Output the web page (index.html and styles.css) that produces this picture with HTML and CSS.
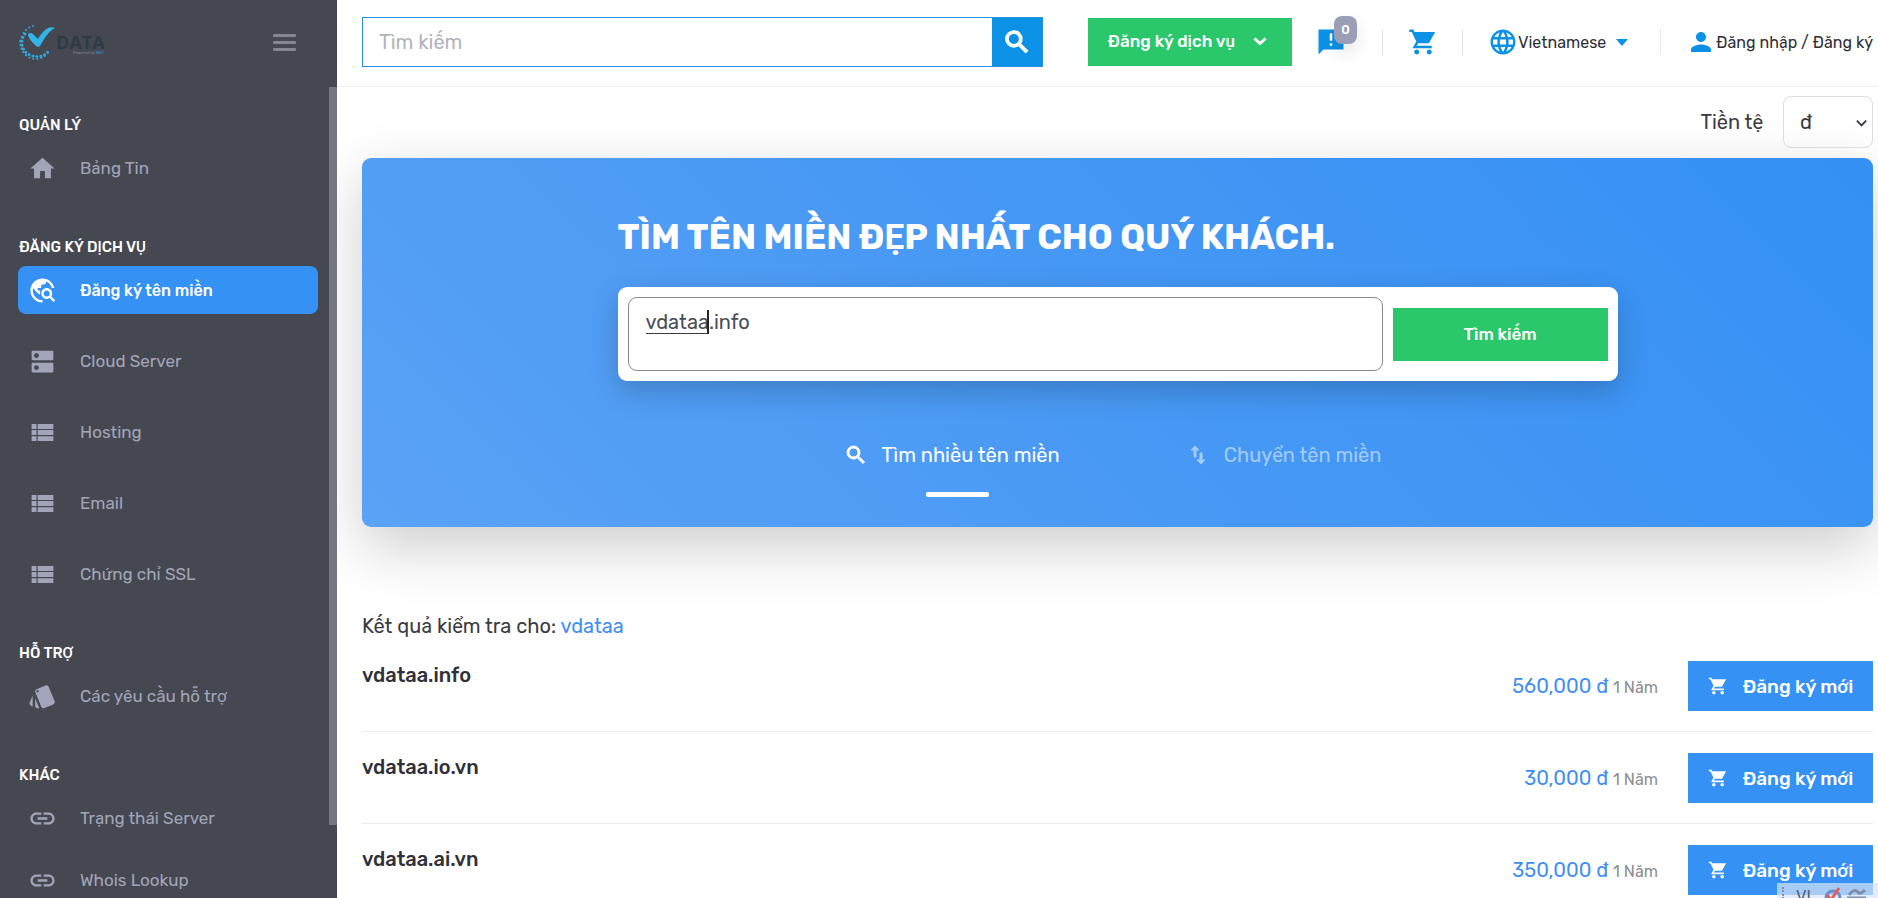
FILE: index.html
```html
<!DOCTYPE html>
<html lang="vi">
<head>
<meta charset="utf-8">
<meta name="viewport" content="width=device-width, initial-scale=1">
<title>Đăng ký tên miền</title>
<link rel="stylesheet" href="styles.css">
</head>
<body>
<svg class="sprite" aria-hidden="true">
  <symbol id="home" viewBox="0 0 24 24"><path d="M10 20v-6h4v6h5v-8h3L12 3 2 12h3v8z"/></symbol>
  <symbol id="explore" viewBox="0 0 24 24"><path d="M19.3 16.9c.4-.7.7-1.5.7-2.4 0-2.5-2-4.5-4.5-4.5S11 12 11 14.5s2 4.5 4.5 4.5c.9 0 1.7-.3 2.4-.7l3.2 3.2 1.4-1.4-3.2-3.2zm-3.8.1c-1.4 0-2.5-1.1-2.5-2.5s1.1-2.5 2.5-2.5 2.5 1.1 2.5 2.5-1.1 2.5-2.5 2.5zM12 20v2C6.48 22 2 17.52 2 12S6.48 2 12 2c4.84 0 8.87 3.44 9.8 8h-2.07c-.64-2.46-2.4-4.47-4.73-5.41V5c0 1.1-.9 2-2 2h-2v2c0 .55-.45 1-1 1H8v2h2v3H9l-4.79-4.79C4.08 10.79 4 11.38 4 12c0 4.41 3.59 8 8 8z"/></symbol>
  <symbol id="dns" viewBox="0 0 24 24"><path d="M20 13H4c-.55 0-1 .45-1 1v6c0 .55.45 1 1 1h16c.55 0 1-.45 1-1v-6c0-.55-.45-1-1-1zM7 19c-1.100 0-2-.9-2-2s.9-2 2-2 2 .9 2 2-.9 2-2 2zM20 3H4c-.55 0-1 .45-1 1v6c0 .55.45 1 1 1h16c.55 0 1-.45 1-1V4c0-.55-.45-1-1-1zM7 9c-1.100 0-2-.9-2-2s.9-2 2-2 2 .9 2 2-.9 2-2 2z"/></symbol>
  <symbol id="list" viewBox="0 0 24 24"><path d="M3 14h4v-4H3v4zm0 5h4v-4H3v4zM3 9h4V5H3v4zm5 5h13v-4H8v4zm0 5h13v-4H8v4zM8 5v4h13V5H8z"/></symbol>
  <symbol id="style" viewBox="0 0 24 24"><path d="M2.53 19.65l1.34.56v-9.03l-2.43 5.86c-.41 1.02.08 2.19 1.09 2.61zm19.5-3.7L17.07 3.98c-.31-.75-1.04-1.21-1.81-1.23-.26 0-.53.04-.79.15L7.1 5.95c-.75.31-1.21 1.03-1.23 1.8-.01.27.04.54.15.8l4.96 11.97c.31.76 1.05 1.22 1.83 1.23.26 0 .52-.05.77-.15l7.36-3.05c1.02-.42 1.51-1.59 1.09-2.6zM7.88 8.75c-.55 0-1-.45-1-1s.45-1 1-1 1 .45 1 1-.45 1-1 1zm-2 11c0 1.1.9 2 2 2h1.45l-3.45-8.34v6.34z"/></symbol>
  <symbol id="link" viewBox="0 0 24 24"><path d="M3.9 12c0-1.71 1.39-3.1 3.1-3.1h4V7H7c-2.76 0-5 2.24-5 5s2.24 5 5 5h4v-1.9H7c-1.71 0-3.1-1.39-3.1-3.1zM8 13h8v-2H8v2zm9-6h-4v1.9h4c1.71 0 3.1 1.39 3.1 3.1s-1.39 3.1-3.1 3.1h-4V17h4c2.76 0 5-2.24 5-5s-2.24-5-5-5z"/></symbol>
  <symbol id="search" viewBox="0 0 24 24"><path d="M15.5 14h-.79l-.28-.27A6.47 6.47 0 0 0 16 9.5 6.5 6.5 0 1 0 9.5 16c1.61 0 3.09-.59 4.23-1.57l.27.28v.79l5 4.99L20.49 19l-4.99-5zm-6 0C7.01 14 5 11.99 5 9.5S7.01 5 9.5 5 14 7.01 14 9.5 11.99 14 9.5 14z"/></symbol>
  <symbol id="cart" viewBox="0 0 24 24"><path d="M7 18c-1.1 0-1.99.9-1.99 2S5.9 22 7 22s2-.9 2-2-.9-2-2-2zM1 2v2h2l3.6 7.59L3.62 17H19v-2H7l1.1-2h8.64l4.97-9H5.21l-.94-2H1zm16 16c-1.1 0-1.99.9-1.99 2s.89 2 1.99 2 2-.9 2-2-.9-2-2-2z"/></symbol>
  <symbol id="chat" viewBox="0 0 24 24"><path d="M22 2H2v20l4-4h16V2zm-9 13h-2v-2h2v2zm0-4h-2V5h2v6z"/></symbol>
  <symbol id="globe" viewBox="0 0 24 24"><path d="M11.99 2C6.47 2 2 6.48 2 12s4.47 10 9.99 10C17.52 22 22 17.52 22 12S17.52 2 11.99 2zm6.93 6h-2.95c-.32-1.25-.78-2.45-1.38-3.56 1.84.63 3.37 1.91 4.33 3.56zM12 4.04c.83 1.2 1.48 2.53 1.91 3.96h-3.82c.43-1.43 1.08-2.76 1.91-3.96zM4.26 14C4.1 13.36 4 12.69 4 12s.1-1.36.26-2h3.38c-.08.66-.14 1.32-.14 2 0 .68.06 1.34.14 2H4.26zm.82 2h2.95c.32 1.25.78 2.45 1.38 3.56-1.84-.63-3.37-1.9-4.33-3.56zm2.95-8H5.08c.96-1.66 2.49-2.93 4.33-3.56C8.81 5.55 8.35 6.75 8.03 8zM12 19.96c-.83-1.2-1.48-2.53-1.91-3.96h3.82c-.43 1.43-1.08 2.76-1.91 3.96zM14.34 14H9.66c-.09-.66-.16-1.32-.16-2 0-.68.07-1.35.16-2h4.68c.09.65.16 1.32.16 2 0 .68-.07 1.34-.16 2zm.25 5.56c.6-1.11 1.06-2.31 1.38-3.56h2.95c-.96 1.65-2.49 2.93-4.33 3.56zM16.36 14c.08-.66.14-1.32.14-2 0-.68-.06-1.34-.14-2h3.38c.16.64.26 1.31.26 2s-.1 1.36-.26 2h-3.38z"/></symbol>
  <symbol id="person" viewBox="0 0 24 24"><path d="M12 12c2.21 0 4-1.79 4-4s-1.79-4-4-4-4 1.79-4 4 1.79 4 4 4zm0 2c-2.67 0-8 1.34-8 4v2h16v-2c0-2.66-5.33-4-8-4z"/></symbol>
  <symbol id="swap" viewBox="0 0 24 24"><path d="M9 3L5 6.99h3V14h2V6.99h3L9 3zm7 14.01V10h-2v7.01h-3L15 21l4-3.99h-3z"/></symbol>
</svg>
<div class="app">
  <aside class="sidebar">
    <div class="brand">
      <svg class="logo" viewBox="0 0 90 38" role="img" aria-label="VDATA">
        <g fill="none" stroke="#2fa8de" stroke-linecap="round">
          <path d="M15 2C1 6-1 25 9 32" stroke-width="2" stroke-dasharray="0 4"/>
          <path d="M7 10C1 17 4 28 12 31s13 2 19-4" stroke-width="3" stroke-dasharray="0 4"/>
          <path d="M2 17c0 9 6 18 16 18 5 0 8-2 11-5" stroke-width="2" stroke-dasharray="0 4"/>
        </g>
        <path d="M10 11c0-2 3-3 5-1l5 5c4-7 10-14 17-11-7 4-10 9-15 18-1 1-3 1-4 0-3-3-7-7-8-11z" fill="#31b6ea"/>
        <text class="logo-name" x="38" y="25">DATA</text>
        <text class="logo-note" x="55" y="30">Powered by <tspan class="logo-net">iNET</tspan></text>
      </svg>
      <button class="burger" type="button" aria-label="Menu"><span></span><span></span><span></span></button>
    </div>
    <nav class="menu">
      <section class="group">
        <h2 class="group-title">QUẢN LÝ</h2>
        <a class="item" href="#"><svg class="item-icon"><use href="#home"/></svg>Bảng Tin</a>
      </section>
      <section class="group">
        <h2 class="group-title">ĐĂNG KÝ DỊCH VỤ</h2>
        <a class="item active" href="#"><svg class="item-icon"><use href="#explore"/></svg>Đăng ký tên miền</a>
        <a class="item" href="#"><svg class="item-icon"><use href="#dns"/></svg>Cloud Server</a>
        <a class="item" href="#"><svg class="item-icon"><use href="#list"/></svg>Hosting</a>
        <a class="item" href="#"><svg class="item-icon"><use href="#list"/></svg>Email</a>
        <a class="item" href="#"><svg class="item-icon"><use href="#list"/></svg>Chứng chỉ SSL</a>
      </section>
      <section class="group">
        <h2 class="group-title">HỖ TRỢ</h2>
        <a class="item" href="#"><svg class="item-icon"><use href="#style"/></svg>Các yêu cầu hỗ trợ</a>
      </section>
      <section class="group compact">
        <h2 class="group-title">KHÁC</h2>
        <a class="item" href="#"><svg class="item-icon"><use href="#link"/></svg>Trạng thái Server</a>
        <a class="item" href="#"><svg class="item-icon"><use href="#link"/></svg>Whois Lookup</a>
      </section>
      <div class="thumb"></div>
    </nav>
  </aside>
  <div class="page">
    <header class="topbar">
      <form class="site-search">
        <input type="search" placeholder="Tìm kiếm" aria-label="Tìm kiếm">
        <button type="button" aria-label="Tìm kiếm"><svg class="icon-lg bold"><use href="#search"/></svg></button>
      </form>
      <button class="order" type="button">Đăng ký dịch vụ
        <svg class="chevron" viewBox="0 0 14 8"><path d="M1.500 1.500 7 6.500l5.500-5"/></svg></button>
      <div class="tools">
        <a class="tool notice" href="#" aria-label="Thông báo"><svg class="icon-lg"><use href="#chat"/></svg><span class="badge">0</span></a>
        <a class="tool" href="#" aria-label="Giỏ hàng"><svg class="icon-lg"><use href="#cart"/></svg></a>
        <button class="tool" type="button"><svg class="icon-lg"><use href="#globe"/></svg>Vietnamese<span class="caret"></span></button>
        <a class="tool" href="#"><svg class="icon-lg"><use href="#person"/></svg>Đăng nhập / Đăng ký</a>
      </div>
    </header>
    <main class="content">
      <div class="currency">
        <label for="currency">Tiền tệ</label>
        <div class="select-wrap">
          <select id="currency"><option>đ</option></select>
          <svg class="select-arrow" viewBox="0 0 14 8"><path d="M2 1.500 7 6.500l5-5"/></svg>
        </div>
      </div>
      <section class="hero">
        <div class="hero-inner">
          <h1>TÌM TÊN MIỀN ĐẸP NHẤT CHO QUÝ KHÁCH.</h1>
          <form class="finder">
            <div class="finder-field">
              <textarea aria-label="Tên miền" spellcheck="false">vdataa.info</textarea>
              <span class="composing"></span>
            </div>
            <button type="button">Tìm kiếm</button>
          </form>
          <div class="tabs">
            <button class="tab current" type="button"><svg class="icon-md bold"><use href="#search"/></svg>Tìm nhiều tên miền</button>
            <button class="tab" type="button"><svg class="icon-md bold"><use href="#swap"/></svg>Chuyển tên miền</button>
          </div>
        </div>
      </section>
      <section class="results">
        <p class="results-title">Kết quả kiểm tra cho: <span>vdataa</span></p>
        <div class="row"><h3>vdataa.info</h3><p class="price">560,000 đ <small>1 Năm</small></p><button class="buy" type="button"><svg class="icon-sm"><use href="#cart"/></svg>Đăng ký mới</button></div>
        <div class="row"><h3>vdataa.io.vn</h3><p class="price">30,000 đ <small>1 Năm</small></p><button class="buy" type="button"><svg class="icon-sm"><use href="#cart"/></svg>Đăng ký mới</button></div>
        <div class="row"><h3>vdataa.ai.vn</h3><p class="price">350,000 đ <small>1 Năm</small></p><button class="buy" type="button"><svg class="icon-sm"><use href="#cart"/></svg>Đăng ký mới</button></div>
      </section>
    </main>
  </div>
  <div class="ime">
    <span class="ime-grip"></span><span>VI</span>
    <svg viewBox="0 0 44 20" class="ime-icons">
      <circle cx="10" cy="11" r="7" fill="none" stroke="#6f8fc4" stroke-width="3"/>
      <path d="M4 8l4 5L16 1" fill="none" stroke="#e0605c" stroke-width="3"/>
      <path d="M24 11h19M26 8c4-6 7-5 10-2 2 1 4-1 6-3" fill="none" stroke="#7d8ea6" stroke-width="3"/>
    </svg>
  </div>
</div>
</body>
</html>
```
FILE: styles.css
```css
* { box-sizing: border-box; }
body { margin: 0; font-family: Rubik, Roboto, "Noto Sans", sans-serif; font-size: 20px; color: #3a3b42; background: #fff; }
h1, h2, h3, p { margin: 0; }
a { color: inherit; text-decoration: none; }
button, input, select, textarea { font: inherit; color: inherit; border: 0; border-radius: 0; background: none; padding: 0; margin: 0; }
svg { fill: currentColor; flex: none; }
.sprite { position: absolute; width: 0; height: 0; }
.icon-lg { width: 30px; height: 30px; }
.icon-md { width: 24px; height: 24px; }
.icon-sm { width: 20px; height: 20px; }
.bold { stroke: currentColor; stroke-width: 1px; }

.app { display: flex; height: 100vh; overflow: hidden; position: relative; }

.sidebar { flex: none; width: 337px; display: flex; flex-direction: column; background: #464851; color: #a2a5b9; position: relative; z-index: 1; }
.brand { flex: none; height: 87px; display: flex; align-items: center; justify-content: space-between; padding: 0 41px 2px 18px; }
.logo { width: 90px; height: 38px; }
.logo-name { font-family: "Open Sans", sans-serif; font-weight: 700; font-size: 18px; fill: #2f3a45; }
.logo-note { font-size: 4px; fill: #7d828c; }
.logo-net { fill: #3c9cd6; }
.burger { display: flex; flex-direction: column; gap: 4px; }
.burger span { width: 23px; height: 3px; border-radius: 1px; background: #85878f; }
.menu { flex: 1; min-height: 0; overflow: hidden; position: relative; padding: 26px 19px 0 18px; font-size: 17px; }
.thumb { position: absolute; right: 0; top: 0; width: 8px; height: 91%; background: #74777f; }
.group { margin-bottom: 43px; }
.group-title { font-size: 15px; font-weight: 500; line-height: 24px; color: #fff; padding-left: 1px; margin-bottom: 7px; }
.item { display: flex; align-items: center; height: 48px; gap: 23px; padding-left: 10px; border-radius: 8px; margin-bottom: 23px; }
.item:last-of-type { margin-bottom: 0; }
.compact .item { margin-bottom: 14px; }
.item-icon { width: 29px; height: 29px; }
.active { background: #3691f4; color: #fff; font-size: 16px; font-weight: 500; }

.page { flex: 1; min-width: 0; display: flex; flex-direction: column; }
.topbar { flex: none; height: 87px; display: flex; align-items: center; padding: 0 5px 2px 25px; border-bottom: 1px solid #ededee; }
.site-search { flex: 0 1 681px; display: flex; height: 50px; border: 1px solid #2491e3; }
.site-search input { flex: 1; min-width: 0; padding: 0 16px; outline: 0; }
.site-search input::placeholder { color: #b1b3bc; opacity: 1; }
.site-search button { width: 50px; display: grid; place-items: center; background: #0b92e7; color: #fff; }
.order { flex: none; display: flex; align-items: center; gap: 18px; height: 48px; margin-left: 45px; padding: 0 25px 2px 20px; background: #2bc76b; color: #fff; font-size: 17px; font-weight: 500; white-space: nowrap; }
.chevron { width: 14px; height: 8px; fill: none; stroke: #fff; stroke-width: 3; }
.tools { flex: 1; display: flex; justify-content: flex-end; font-size: 16px; color: #2f3037; }
.tool { display: flex; align-items: center; height: 26px; padding: 0 24px 0 25px; border-right: 1px solid #e6e7ea; white-space: nowrap; }
.tool:last-child { border: 0; padding-right: 0; }
.tool svg { color: #0b92e7; }
.notice { position: relative; padding-left: 24px; padding-right: 36px; }
.badge { position: absolute; left: 42px; top: -13px; width: 23px; height: 28px; border-radius: 8px; background: #9b9eb6; color: #fff; font-size: 13px; font-weight: 500; line-height: 28px; text-align: center; box-shadow: 0 8px 18px rgba(0, 0, 0, .1); }
.caret { margin: 0 8px 0 10px; border: 6px solid transparent; border-top: 7px solid #0b92e7; border-bottom: 0; }

.content { flex: 1; min-height: 0; padding: 9px 5px 0 25px; }
.currency { display: flex; justify-content: flex-end; align-items: center; gap: 20px; margin-bottom: 10px; }
.select-wrap { position: relative; z-index: 1; }
.select-wrap select { display: block; width: 90px; height: 52px; padding-left: 16px; border: 1px solid #dcdde0; border-radius: 8px; appearance: none; }
.select-arrow { position: absolute; right: 5px; top: 23px; width: 13px; height: 8px; fill: none; stroke: #3a3b42; stroke-width: 2; pointer-events: none; }
.hero { padding: 55px 20px 30px; border-radius: 9px; background: linear-gradient(45deg, #5aa2f6, #4698f4 50%, #3590f4); color: #fff; box-shadow: 0 20px 60px rgba(0, 0, 0, .2); }
.hero-inner { max-width: 1000px; margin: 0 auto; }
h1 { font-size: 35px; line-height: 48px; font-weight: 700; margin-bottom: 26px; }
.finder { display: flex; align-items: center; gap: 10px; padding: 10px; border-radius: 9px; background: #fff; box-shadow: 0 10px 30px rgba(0, 0, 0, .2); }
.finder-field { flex: 1; position: relative; }
.finder textarea { display: block; width: 100%; height: 74px; padding: 12px 17px; border: 1px solid #848895; border-radius: 9px; color: #4b4d55; line-height: 24px; resize: none; outline: 0; }
.composing { position: absolute; left: 18px; top: 13px; width: 63px; height: 24px; border: solid #3a3b42; border-width: 0 2px 1px 0; border-right-color: #24252a; }
.finder button { width: 215px; height: 53px; background: #2bc76b; color: #fff; font-size: 17px; font-weight: 500; }
.tabs { display: flex; justify-content: center; gap: 126px; margin-top: 60px; padding-right: 10px; }
.tab { position: relative; display: flex; align-items: center; gap: 14px; height: 56px; padding-bottom: 28px; opacity: .5; }
.current { opacity: 1; }
.current::after { content: ""; position: absolute; left: 50%; bottom: 0; width: 63px; height: 5px; margin-left: -26px; border-radius: 2px; background: #fff; }

.results { padding-top: 85px; }
.results-title { line-height: 28px; }
.results-title span { color: #3f8ff2; }
.row { display: flex; align-items: flex-start; padding: 21px 0 20px; border-bottom: 1px solid #ececee; }
.row h3 { flex: 1; font-size: 20px; line-height: 28px; font-weight: 500; color: #303138; }
.price { height: 50px; line-height: 50px; color: #3f8ff2; margin-right: 30px; }
.price small { font-size: 16px; color: #8d8e93; }
.buy { display: flex; align-items: center; justify-content: center; gap: 15px; width: 185px; height: 50px; background: #3691f4; color: #fff; font-size: 19px; font-weight: 500; }

.ime { position: absolute; right: 0; bottom: 0; z-index: 2; width: 101px; height: 15px; overflow: hidden; display: flex; align-items: flex-start; gap: 12px; padding: 4px 8px 0 5px; background: rgba(214, 228, 248, .7); color: #4f6078; font-size: 16px; line-height: 20px; }
.ime-grip { width: 2px; height: 12px; border-left: 2px dotted #7d8ea6; }
.ime-icons { width: 44px; height: 20px; }
```
